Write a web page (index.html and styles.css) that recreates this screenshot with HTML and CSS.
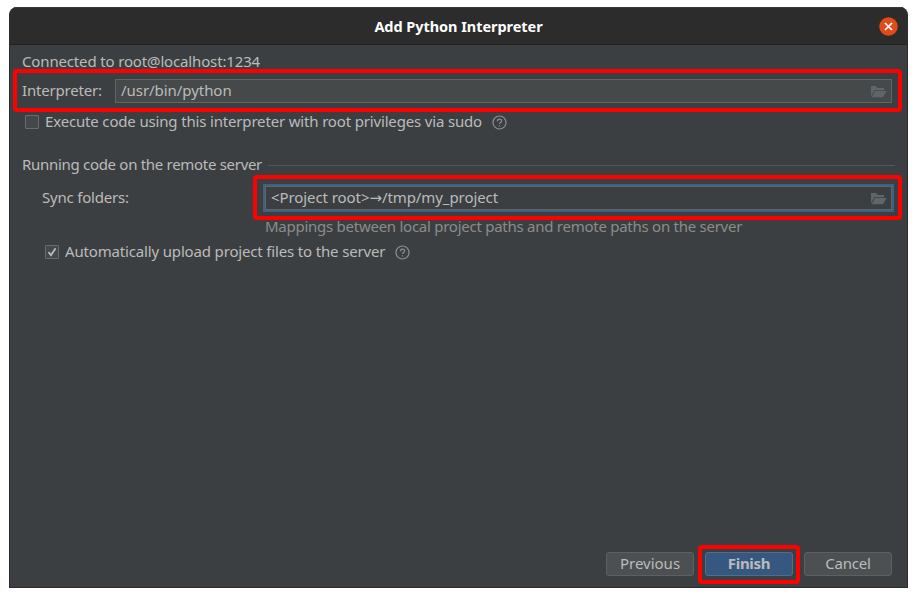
FILE: index.html
```html
<!DOCTYPE html>
<html lang="en">
<head>
<meta charset="utf-8">
<title>Add Python Interpreter</title>
<link rel="stylesheet" href="styles.css">
</head>
<body>
<svg class="defs" width="0" height="0">
  <symbol id="folder" viewBox="0 0 16 12"><path d="M0 10V0h5l1.500 2H13v2.200H3.200L.5 9.800z"/><path d="M4 5h11.500L12 11.300H.6z"/></symbol>
  <symbol id="help" viewBox="0 0 15 15"><circle cx="7.500" cy="7.500" r="6.500"/><path d="M5.400 6.200C5.400 3.400 9.600 3.400 9.600 6c0 1.500-2.100 1.500-2.100 3.100M7.500 10.200v1.300"/></symbol>
</svg>
<main class="window">
  <header class="titlebar">
    <h1 class="title">Add Python Interpreter</h1>
    <button class="close" aria-label="Close"><svg width="19" height="19" viewBox="0 0 19 19"><circle cx="9.500" cy="9.500" r="9.300"/><path d="M6 6l7 7M13 6l-7 7"/></svg></button>
  </header>
  <section class="content">
    <div class="row connected"><span class="t-connected">Connected to root@localhost:1234</span></div>
    <div class="row interpreter marked">
      <span class="t-interpreter">Interpreter:</span>
      <div class="field"><span class="t-python">/usr/bin/python</span><svg class="folder"><use href="#folder"/></svg></div>
    </div>
    <div class="row sudo"><i class="check"></i><span class="t-sudo">Execute code using this interpreter with root privileges via sudo</span><svg class="help"><use href="#help"/></svg></div>
    <div class="row heading"><span class="t-heading">Running code on the remote server</span><i class="rule"></i></div>
    <div class="row sync"><span class="t-sync">Sync folders:</span>
      <div class="sync-box marked"><div class="field focused"><span class="t-mapping">&lt;Project root&gt;<span class="arrow">→</span>/tmp/my_project</span><svg class="folder"><use href="#folder"/></svg></div></div>
    </div>
    <div class="row hint"><span class="t-hint">Mappings between local project paths and remote paths on the server</span></div>
    <div class="row upload"><i class="check"><svg width="12" height="12" viewBox="0 0 12 12"><path d="M2.500 6.200l2.500 3 4.600-7"/></svg></i><span class="t-upload">Automatically upload project files to the server</span><svg class="help"><use href="#help"/></svg></div>
  </section>
  <footer class="footer">
    <button class="btn"><span class="t-previous">Previous</span></button>
    <div class="finish-box marked"><button class="btn primary"><span class="t-finish">Finish</span></button></div>
    <button class="btn"><span class="t-cancel">Cancel</span></button>
  </footer>
</main>
</body>
</html>
```
FILE: styles.css
```css
* { box-sizing: border-box; }
body { margin: 0; padding: 7px 9px 0; height: 597px; background: #fff; overflow: hidden; font: 15px/20px "Noto Sans", sans-serif; color: #bbb; }
.defs { position: absolute; }
.window { width: 899px; height: 581px; display: flex; flex-direction: column; background: #3c3f41; border: solid #2d2b2d; border-width: 0 1px 1px; border-radius: 8px 8px 0 0; overflow: hidden; }
.titlebar { height: 38px; flex: none; display: grid; grid-template-columns: 28px 1fr 28px; align-items: center; background: #2c2c2c; border-top: 1px solid #3a3a3a; border-bottom: 1px solid #222; }
.title { grid-column: 2; justify-self: center; margin: 0; font-size: 14.500px; line-height: 20px; font-weight: 700; letter-spacing: -.05px; color: #fff; white-space: nowrap; }
.close { width: 19px; height: 19px; padding: 0; border: 0; background: none; }
.close svg { display: block; fill: #e14b1a; }
.close path { stroke: #fff; stroke-width: 1.700; }
.content { flex: 1; }
.row { display: flex; align-items: center; white-space: nowrap; }
.row [class^="t-"] { padding-bottom: 2px; }
.connected { height: 24px; padding: 9px 0 0 12px; }
.marked { position: relative; }
.marked::after { content: ""; position: absolute; inset: 0; border: 4px solid #f00; border-radius: 4px; pointer-events: none; }
.interpreter { width: 889px; height: 43px; margin-left: 3px; padding: 0 10px 0 9px; justify-content: space-between; }
.field { width: 777px; height: 24px; padding: 0 4px 0 5px; display: flex; align-items: center; justify-content: space-between; background: #45494a; border: 1px solid #646464; }
.folder { width: 16px; height: 12px; margin-top: 2px; fill: #5f6669; }
.sudo { height: 20px; padding-left: 15px; }
.check { width: 14px; height: 14px; margin-right: 6px; flex: none; border: 1px solid #6b6b6b; border-radius: 1px; background: #43494a; }
.check svg { display: block; fill: none; stroke: #bbb; stroke-width: 1.800; }
.help { width: 15px; height: 15px; margin-left: 10px; fill: none; stroke: #8b8f91; stroke-width: 1.200; }
.heading { height: 20px; margin-top: 23px; padding: 0 12px; }
.rule { flex: 1; height: 1px; margin-left: 6px; background: #515658; }
.sync { height: 45px; padding-left: 32px; justify-content: space-between; }
.sync-box { width: 649px; height: 45px; margin-right: 5px; padding: 11px 10px 0 12px; }
.focused { width: 627px; background: #3c3f41; box-shadow: 0 0 0 2px #3d6185; }
.arrow { font-family: "DejaVu Sans", sans-serif; line-height: 1; }
.hint { height: 14px; padding-left: 255px; color: #8c8c8c; }
.upload { height: 20px; margin-top: 8px; padding-left: 35px; }
.footer { height: 42px; display: flex; justify-content: flex-end; padding-right: 15px; }
.btn { width: 88px; height: 24px; margin: 7px 0 0; padding: 0; border: 1px solid #5e6060; border-radius: 3px; background: #4c5052; color: #bbb; font: inherit; line-height: 20px; }
.btn span { display: block; margin-top: -2px; }
.finish-box { width: 102px; height: 39px; margin: 0 4px; padding-left: 7px; }
.primary { background: #365880; border-color: #4c708c; font-weight: 700; }
.t-connected { letter-spacing: -.15px; }
.t-interpreter { letter-spacing: -.18px; }
.t-python { letter-spacing: -.05px; }
.t-sudo { letter-spacing: -.165px; }
.t-heading { letter-spacing: -.3px; }
.t-sync { letter-spacing: -.2px; }
.t-mapping { letter-spacing: -.08px; }
.t-hint { letter-spacing: -.26px; }
.t-upload { letter-spacing: -.16px; }
.t-finish { letter-spacing: -.3px; }
.t-cancel { letter-spacing: -.2px; }
```
